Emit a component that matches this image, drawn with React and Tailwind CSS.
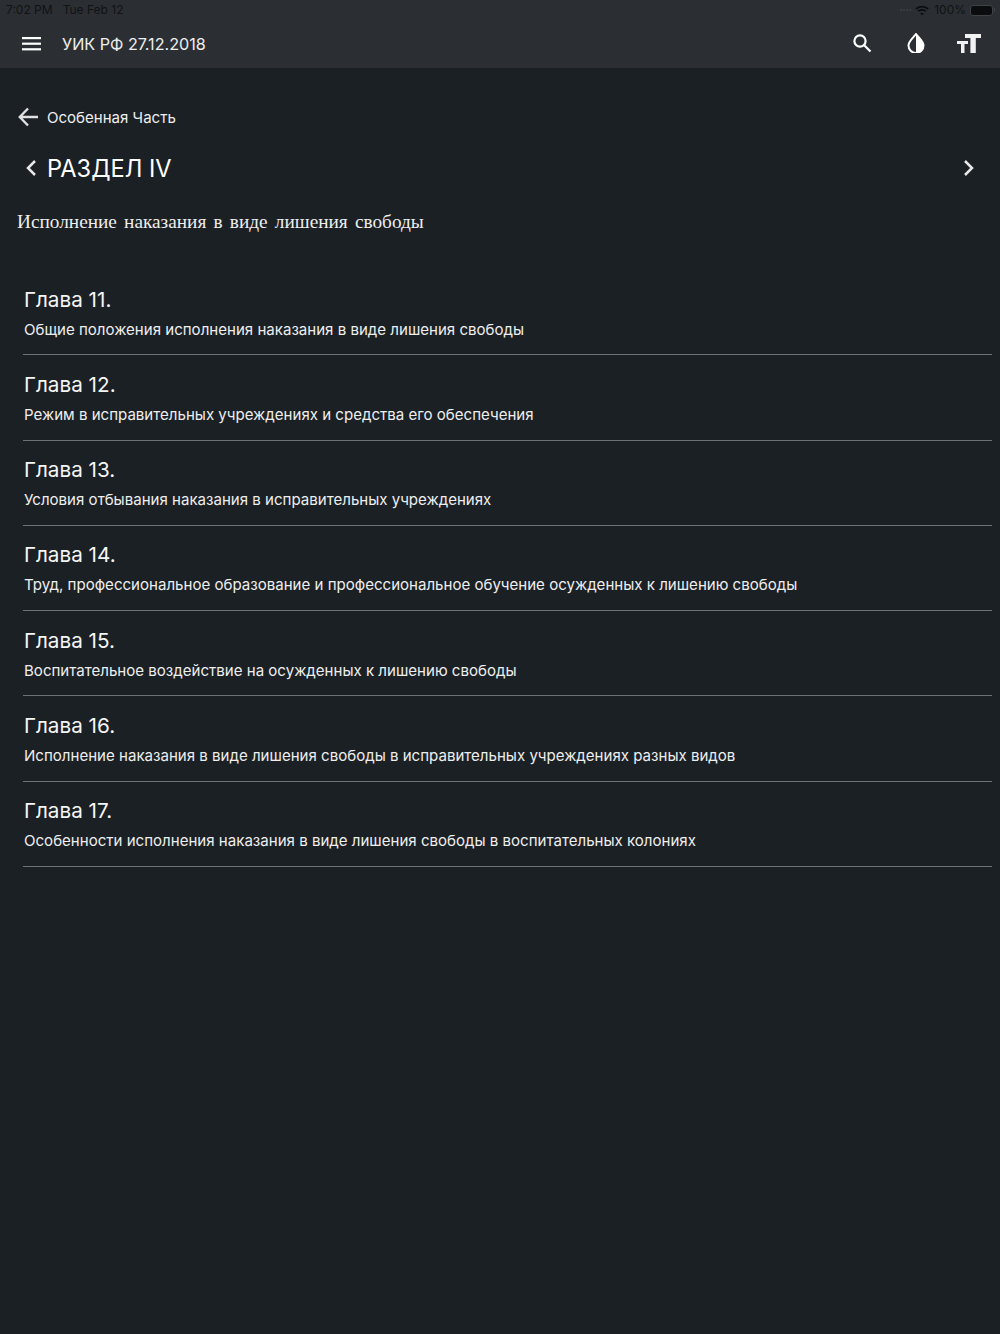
import React from "react";

const chapters = [
  ["Глава 11.", "Общие положения исполнения наказания в виде лишения свободы"],
  ["Глава 12.", "Режим в исправительных учреждениях и средства его обеспечения"],
  ["Глава 13.", "Условия отбывания наказания в исправительных учреждениях"],
  ["Глава 14.", "Труд, профессиональное образование и профессиональное обучение осужденных к лишению свободы"],
  ["Глава 15.", "Воспитательное воздействие на осужденных к лишению свободы"],
  ["Глава 16.", "Исполнение наказания в виде лишения свободы в исправительных учреждениях разных видов"],
  ["Глава 17.", "Особенности исполнения наказания в виде лишения свободы в воспитательных колониях"],
];

const Wifi = () => (
  <svg width="14" height="11" viewBox="0 0 16 12" fill="none" stroke="#0b0c0d" strokeWidth="2">
    <path d="M1 4.2C5 .6 11 .6 15 4.2" />
    <path d="M3.5 6.8C6 4.6 10 4.6 12.5 6.8" />
    <path d="M8 11.5 5.8 9.2C7 8.2 9 8.2 10.2 9.2Z" fill="#0b0c0d" stroke="none" />
  </svg>
);

export default function App() {
  return (
    <div className="min-h-[1334px] bg-[#1b2025] text-white font-['Inter','Liberation_Sans',sans-serif]">
      <header className="h-[68px] bg-[#2b2f33]">
        <div className="h-5 flex items-center justify-between pl-[6px] pr-[5px] text-[12px] text-[#101214]">
          <div className="flex gap-[10px]">
            <span>7:02 PM</span>
            <span>Tue Feb 12</span>
          </div>
          <div className="flex items-center">
            <div className="flex gap-[1px] mr-[4px]">
              <span className="w-[2px] h-[2px] rounded-full bg-[#3f4347]" />
              <span className="w-[2px] h-[2px] rounded-full bg-[#3f4347]" />
              <span className="w-[2px] h-[2px] rounded-full bg-[#3f4347]" />
              <span className="w-[2px] h-[2px] rounded-full bg-[#3f4347]" />
            </div>
            <Wifi />
            <span className="ml-[5px]">100%</span>
            <div className="ml-[4px] w-[23px] h-[11px] rounded-[3px] border border-[#3f4347] bg-[#0b0c0d]" />
            <div className="ml-[1px] w-[1px] h-[4px] bg-[#3f4347]" />
          </div>
        </div>
        <div className="h-12 flex items-center pl-[22px] pr-[19px]">
          <svg width="19" height="14" viewBox="0 0 19 14" fill="#fff" className="-mt-[1px]">
            <rect y="0" width="19" height="2.2" />
            <rect y="5.6" width="19" height="2.2" />
            <rect y="11.2" width="19" height="2.2" />
          </svg>
          <span className="ml-[21px] text-[16.15px] text-[#eeeeee] mt-[1px]">УИК РФ 27.12.2018</span>
          <div className="ml-auto flex items-center">
            <svg width="20" height="20" viewBox="0 0 20 20" fill="none" stroke="#fff" strokeWidth="2.2" className="-mt-[2px]">
              <circle cx="8" cy="8" r="5.6" />
              <path d="M12 12l6.5 6.5" />
            </svg>
            <svg width="18" height="20" viewBox="0 0 18 20" className="ml-[35px] -mt-[2px]">
              <path d="M9 1 C6 5 1.5 8 1.5 12.5 A7.5 7.5 0 0 0 16.5 12.5 C16.5 8 12 5 9 1Z" fill="#2b2f33" stroke="#fff" strokeWidth="2" />
              <path d="M9 1 C12 5 16.5 8 16.5 12.5 A7.5 7.5 0 0 1 9 20Z" fill="#fff" />
            </svg>
            <svg width="24" height="19" viewBox="0 0 24 19" fill="#f2f2f2" className="ml-[32px] -mt-[2px]">
              <path d="M0 7h11v3H7.5v9h-3.5v-9H0z" />
              <path d="M8 0h16v4h-5.2v15h-5.4V4H8z" />
            </svg>
          </div>
        </div>
      </header>

      <main>
        <div className="pt-[37px] pl-[18px] flex items-center h-[61px]">
          <svg width="20" height="20" viewBox="0 0 20 20" fill="none" stroke="#e0e0e0" strokeWidth="2.4">
            <path d="M20 10H1.8M10 1.5 1.8 10l8.2 8.5" />
          </svg>
          <span className="ml-[9px] text-[15.05px] text-[#eeeeee] mt-[2px]">Особенная Часть</span>
        </div>
        <div className="mt-[16px] h-[48px] flex items-center pl-[26px] pr-[26px]">
          <svg width="10" height="16" viewBox="0 0 10 16" fill="none" stroke="#e8e8e8" strokeWidth="2.5" className="-mt-[2px]">
            <path d="M9 1 2 8l7 7" />
          </svg>
          <span className="ml-[11px] text-[23.6px] text-white">РАЗДЕЛ IV</span>
          <svg width="10" height="16" viewBox="0 0 10 16" fill="none" stroke="#e8e8e8" strokeWidth="2.5" className="ml-auto -mt-[2px]">
            <path d="M1 1l7 7-7 7" />
          </svg>
        </div>
        <p className="mt-[14px] pl-[17px] text-[19.3px] leading-[30px] [word-spacing:2.4px] text-[#eeeeee] font-['Liberation_Serif',serif]">
          Исполнение наказания в виде лишения свободы
        </p>
        <ul className="mt-[33px] ml-[23px] mr-[8px]">
          {chapters.map(([title, text]) => (
            <li key={title} className="h-[85.3px] border-b border-[#6e7174] pt-[14.5px]">
              <div className="text-[20.7px] leading-[30px] text-[#f5f5f5] pl-[1px]">{title}</div>
              <div className="mt-[3px] text-[15.07px] leading-[24px] text-[#eeeeee] pl-[1px]">{text}</div>
            </li>
          ))}
        </ul>
      </main>
    </div>
  );
}
